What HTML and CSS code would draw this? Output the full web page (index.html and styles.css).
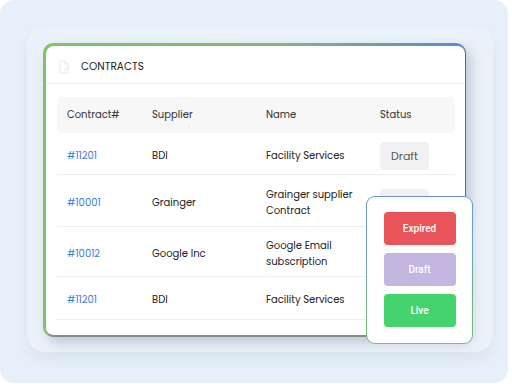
FILE: index.html
```html
<html>
  <head>
    <link rel="stylesheet" href="styles.css">
  </head>
  <body>
    <div class="screen">
      <div class="stage">
        <div class="cardframe">
          <div class="card">
            <div class="cardhead">
              <svg class="docicon" width="11" height="14" viewBox="0 0 11 14">
                <path d="M1 1h5l3 3v9H1z" fill="none" stroke="#ececec" stroke-width="1.2" />
                <path d="M6 1v3h3" fill="none" stroke="#ececec" stroke-width="1.2" />
                <path d="M5 11l4-4" fill="none" stroke="#ececec" stroke-width="1.2" />
              </svg>
              <span>CONTRACTS</span>
            </div>

            <div class="tablewrap">
              <div class="row headrow">
                <div class="c1">Contract#</div>
                <div class="c2">Supplier</div>
                <div class="c3">Name</div>
                <div class="c4">Status</div>
              </div>
              <div class="row r1">
                <div class="c1 link">#11201</div>
                <div class="c2">BDI</div>
                <div class="c3">Facility Services</div>
                <div class="c4"><span class="badge">Draft</span></div>
              </div>
              <div class="row r2">
                <div class="c1 link">#10001</div>
                <div class="c2">Grainger</div>
                <div class="c3">Grainger supplier<br />Contract</div>
                <div class="c4"><span class="badge">Draft</span></div>
              </div>
              <div class="row r3">
                <div class="c1 link">#10012</div>
                <div class="c2">Google Inc</div>
                <div class="c3">Google Email<br />subscription</div>
                <div class="c4"></div>
              </div>
              <div class="row r4">
                <div class="c1 link">#11201</div>
                <div class="c2">BDI</div>
                <div class="c3">Facility Services</div>
                <div class="c4"></div>
              </div>
            </div>
          </div>

          <div class="statusmenu">
            <div class="statusinner">
              <button class="statusbtn expired">Expired</button>
              <button class="statusbtn draft">Draft</button>
              <button class="statusbtn live">Live</button>
            </div>
          </div>
        </div>
      </div>
    </div>
  </body>
</html>
```

FILE: styles.css
```css
body {
  margin: 0;
  background-color: #ffffff;
  font-family: "Poppins", "Inter", "Noto Sans", sans-serif;
}

.screen {
  width: 508px;
  height: 383px;
  box-sizing: border-box;
  background-color: #e7f0fa;
  border-radius: 14px;
  padding: 26px 15px 31px 27px;
}

.stage {
  height: 100%;
  box-sizing: border-box;
  background-color: #eaf1f9;
  border-radius: 18px;
  box-shadow: 0 8px 14px rgba(160, 180, 205, 0.2);
  padding: 17px 27px 15px 16px;
}

.cardframe {
  position: relative;
  height: 100%;
  box-sizing: border-box;
  padding: 3px 0 0 3px;
  border-radius: 10px;
  background: linear-gradient(90deg, #7cc36a 0%, #84b876 55%, #5d86d8 100%);
  box-shadow: 5px 6px 12px rgba(110, 130, 150, 0.35);
}

.card {
  height: 100%;
  box-sizing: border-box;
  background-color: #ffffff;
  border-right: 1px solid #6b6b6b;
  border-bottom: 2px solid #8a8a8a;
  border-radius: 8px;
}

.cardhead {
  height: 38px;
  box-sizing: border-box;
  padding: 5px 0 0 13px;
  display: flex;
  align-items: center;
  gap: 11px;
  border-bottom: 1px solid #efefef;
  font-size: 10.5px;
  color: #1d1d1d;
}

.tablewrap {
  padding: 13px 10px 0 11px;
}

.row {
  display: flex;
  align-items: center;
  box-sizing: border-box;
  border-bottom: 1px solid #eeeeee;
  font-size: 10px;
  line-height: 16px;
  color: #222222;
}

.headrow {
  height: 36px;
  background-color: #f7f7f7;
  border-radius: 5px;
  border-bottom: none;
  color: #333333;
}

.r1 {
  height: 42px;
  padding-top: 4px;
}

.r2 {
  height: 52px;
  padding-top: 5px;
}

.r3 {
  height: 50px;
  padding-top: 5px;
}

.r4 {
  height: 43px;
  padding-top: 4px;
}

.c1 {
  width: 85px;
  padding-left: 10px;
}

.c2 {
  width: 114px;
}

.c3 {
  width: 114px;
}

.c4 {
  flex: 1;
}

.link {
  color: #3d7ddf;
}

.badge {
  display: inline-block;
  width: 49px;
  height: 28px;
  line-height: 28px;
  text-align: center;
  background-color: #f1f1f3;
  border-radius: 4px;
  color: #555555;
  font-size: 11px;
}

.statusmenu {
  position: absolute;
  left: 323px;
  top: 153px;
  width: 107px;
  height: 148px;
  box-sizing: border-box;
  padding: 1px;
  border-radius: 9px;
  background: linear-gradient(180deg, #6b93e0 0%, #79bf69 100%);
}

.statusinner {
  height: 100%;
  box-sizing: border-box;
  background-color: #ffffff;
  border-radius: 8px;
  display: flex;
  flex-direction: column;
  align-items: center;
  gap: 8px;
  padding-top: 15px;
}

.statusbtn {
  width: 72px;
  height: 33px;
  border: none;
  border-radius: 4px;
  color: #ffffff;
  font-family: "Roboto", sans-serif;
  font-weight: 500;
  font-size: 10px;
}

.expired {
  background-color: #e85459;
}

.draft {
  background-color: #c3b6e0;
}

.live {
  background-color: #45d36e;
}
```
